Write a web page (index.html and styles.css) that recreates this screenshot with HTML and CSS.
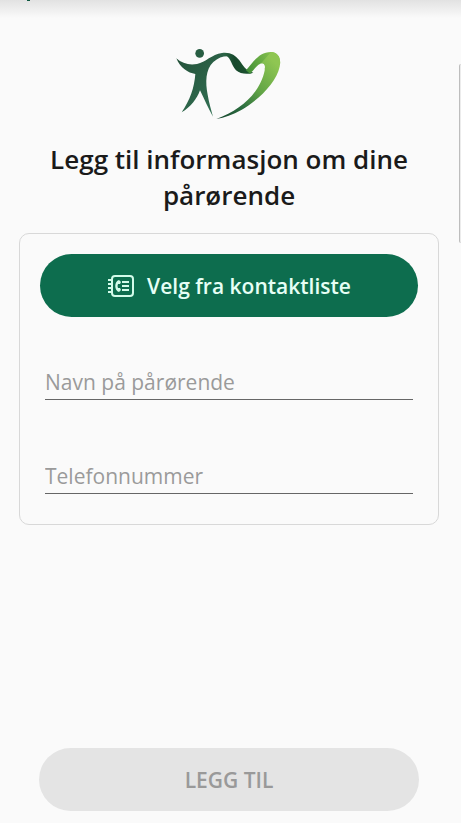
FILE: index.html
```html
<!DOCTYPE html>
<html lang="nb">
<head>
<meta charset="utf-8">
<meta name="viewport" content="width=device-width, initial-scale=1">
<title>Pårørende</title>
<link rel="stylesheet" href="styles.css">
</head>
<body>
<div class="top-shade"></div>
<div class="edge-handle"></div>
<main class="page">
  <svg class="logo" viewBox="0 0 390 255" aria-hidden="true">
    <defs>
      <linearGradient id="body" x1="0" y1="0" x2="1" y2="1">
        <stop offset="0" stop-color="#235038"/>
        <stop offset="1" stop-color="#36785a"/>
      </linearGradient>
      <linearGradient id="ribbon" x1="0" y1="0" x2="1" y2="0">
        <stop offset="0" stop-color="#2f6b49"/>
        <stop offset="0.4" stop-color="#17482c"/>
        <stop offset="1" stop-color="#1d5630"/>
      </linearGradient>
      <linearGradient id="heart" gradientUnits="userSpaceOnUse" x1="335" y1="70" x2="170" y2="235">
        <stop offset="0" stop-color="#8fc652"/>
        <stop offset="0.4" stop-color="#61a445"/>
        <stop offset="0.7" stop-color="#2c6e40"/>
        <stop offset="1" stop-color="#194a30"/>
      </linearGradient>
      <linearGradient id="fold" gradientUnits="userSpaceOnUse" x1="240" y1="95" x2="335" y2="45">
        <stop offset="0" stop-color="#3c8a36"/>
        <stop offset="0.5" stop-color="#63a842"/>
        <stop offset="1" stop-color="#8ac34e"/>
      </linearGradient>
    </defs>
    <circle cx="107" cy="40" r="13" fill="#275d42"/>
    <path fill="url(#body)" d="M37 55C54 71 76 76 99 72C125 67 143 43 174 39C188 38 199 42 206 51C187 46 166 50 148 66C124 88 124 128 131 164C135 189 142 210 147 230C134 207 121 178 108 151C99 177 80 201 53 217C78 180 91 143 94 102C72 99 49 84 37 55Z"/>
    <path fill="url(#ribbon)" d="M174 39C199 36 214 46 226 61C238 77 244 92 268 98C253 104 229 103 216 91C202 77 202 54 184 46Z"/>
    <path fill="url(#fold)" d="M246 91C270 64 286 36 321 36C341 37 351 52 348 73L302 88C305 74 300 67 289 71C276 77 269 92 258 101Z"/>
    <path fill="url(#heart)" d="M321 36C343 37 352 56 347 80C337 127 286 178 232 210C206 225 182 233 157 237C207 219 248 190 274 154C290 131 301 106 303 83C304 73 299 67 290 71Z"/>
  </svg>
  <h1 class="title">Legg til informasjon om dine pårørende</h1>
  <form class="form" id="contact-form">
    <button class="button button-primary" type="button">
      <svg class="book-icon" viewBox="0 0 28 24" aria-hidden="true">
        <rect x="5" y="2" width="21" height="20" rx="3"/>
        <path d="M1 6h4M1 10h4M1 14h4M1 18h4M15 8h7M15 12h7M15 16h7"/>
        <path class="phone" d="M12 6C7 7 7 17 12 18L14 16L13 14L11 14Q10 12 11 10L13 10L14 8Z"/>
      </svg>
      <span>Velg fra kontaktliste</span>
    </button>
    <input class="field" type="text" aria-label="Navn på pårørende" placeholder="Navn på pårørende">
    <input class="field" type="tel" aria-label="Telefonnummer" placeholder="Telefonnummer">
  </form>
  <button class="button button-submit" type="submit" form="contact-form" disabled>LEGG TIL</button>
</main>
</body>
</html>
```
FILE: styles.css
```css
* {
  box-sizing: border-box;
}

body {
  margin: 0;
  background: #fafafa;
  color: #1a1a1a;
  font-family: "Open Sans", "Noto Sans", sans-serif;
}

.top-shade {
  position: absolute;
  inset: 0 0 auto;
  height: 18px;
  background: linear-gradient(#e2e2e2, #fafafa);
}

.top-shade::before {
  content: "";
  position: absolute;
  left: 27px;
  top: 0;
  width: 3px;
  height: 1px;
  background: #0e5840;
}

.edge-handle {
  position: absolute;
  top: 64px;
  right: 0;
  width: 2px;
  height: 179px;
  border-left: 1px solid #bdbdbd;
  border-radius: 4px 0 0 4px;
  background: #ececec;
}

.page {
  display: flex;
  flex-direction: column;
  min-height: 100vh;
  padding: 40px 22px 12px 19px;
}

.logo {
  align-self: center;
  width: 130px;
  height: 85px;
}

.title {
  margin: 16px 0 20px;
  font-size: 26px;
  line-height: 36px;
  font-weight: 600;
  text-align: center;
}

.form {
  display: flex;
  flex-direction: column;
  padding: 20px 20px 30px;
  border: 1px solid #d8d8d8;
  border-radius: 10px;
}

.button {
  display: flex;
  align-items: center;
  justify-content: center;
  gap: 12px;
  height: 63px;
  padding: 0 20px;
  border: 0;
  border-radius: 32px;
  font: 600 21px/28px "Open Sans", "Noto Sans", sans-serif;
}

.button-primary {
  background: #0d6d4e;
  color: #e6fff5;
}

.book-icon {
  width: 28px;
  height: 24px;
  fill: none;
  stroke: #d3fbea;
  stroke-width: 2;
}

.book-icon .phone {
  fill: #d3fbea;
  stroke: none;
}

.field {
  height: 40px;
  margin: 43px 5px 0;
  padding: 4px 0 0;
  border: 0;
  border-bottom: 1px solid #666;
  border-radius: 0;
  outline: 0;
  background: transparent;
  color: #1a1a1a;
  font: 400 21px/28px "Open Sans", "Noto Sans", sans-serif;
}

.field + .field {
  margin-top: 54px;
}

.field::placeholder {
  color: #9a9a9a;
  opacity: 1;
}

.button-submit {
  margin: auto 20px 0;
  background: #e4e4e4;
  color: #999;
}
```
